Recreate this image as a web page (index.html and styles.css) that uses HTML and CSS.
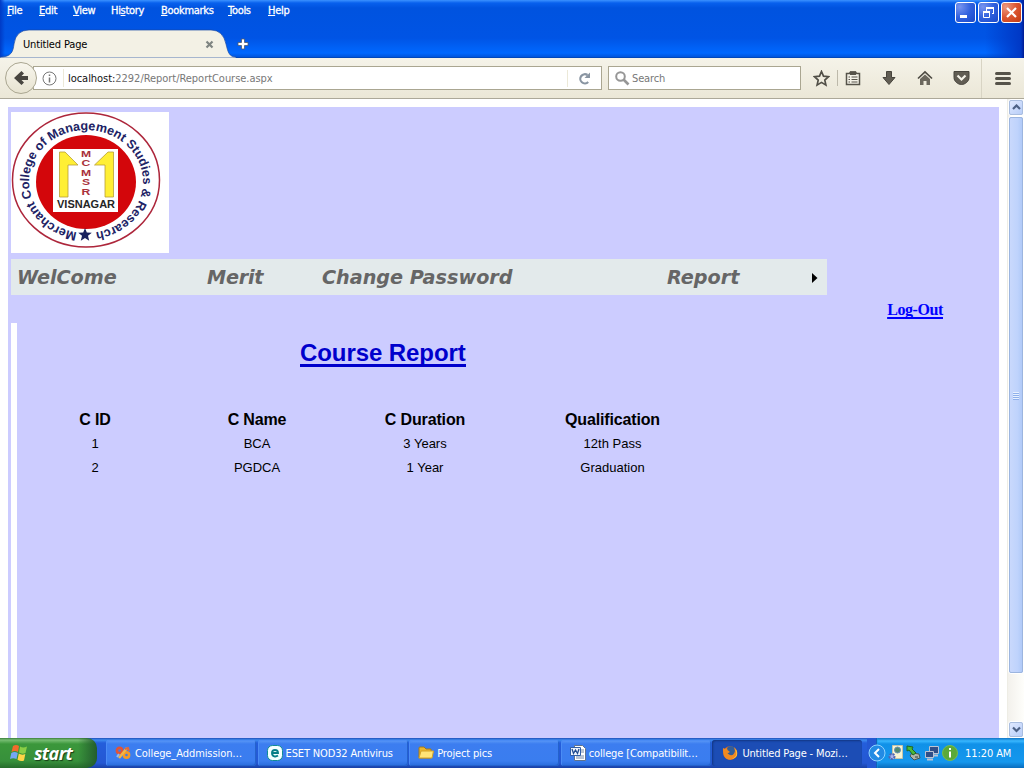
FILE: index.html
```html
<!DOCTYPE html>
<html lang="en">
<head>
<meta charset="utf-8">
<title>Untitled Page</title>
<link rel="stylesheet" href="styles.css">
</head>
<body>
<div class="screen">
  <header class="chrome">
    <div class="menu-row">
      <nav class="menus">
        <span class="m-file"><u>F</u>ile</span><span class="m-edit"><u>E</u>dit</span><span class="m-view"><u>V</u>iew</span><span class="m-history">Hi<u>s</u>tory</span><span class="m-bookmarks"><u>B</u>ookmarks</span><span class="m-tools"><u>T</u>ools</span><span class="m-help"><u>H</u>elp</span>
      </nav>
      <div class="window-buttons">
        <span class="wbtn"><svg width="19" height="19"><path d="M4 12h7v3H4z" fill="#fff"/></svg></span>
        <span class="wbtn"><svg width="19" height="19" fill="none" stroke="#fff"><path d="M7 4.500h8M7 5.500h8M14.500 5v6M7.500 5v3M13 10.500h2"/><path d="M4.500 8v6.500h6V8M4 8.500h7M4 9.500h7"/></svg></span>
        <span class="wbtn close"><svg width="19" height="19"><path d="M5 5l9 9M14 5l-9 9" stroke="#fff" stroke-width="2.200"/></svg></span>
      </div>
    </div>
    <div class="tab-row">
      <svg class="tab-shape" width="236" height="29"><path d="M0 28C12 28 13 22 14 15Q16 1 29 1H211Q223 1 226 15C228 23 229 28 236 28V29H0Z" fill="#f3f1e5" stroke="#1747a5" stroke-width=".7"/></svg>
      <div class="tab"><span class="tab-title">Untitled Page</span>
        <svg class="tab-close" width="9" height="9"><path d="M1.500 1.500l6 6M7.500 1.500l-6 6" stroke="#7f8581" stroke-width="2.200"/></svg>
      </div>
      <svg class="new-tab" width="13" height="13"><path d="M4.500 1h3v3.500H11v3H7.500V11h-3V7.500H1v-3h3.500z" fill="#fff" stroke="#4b5a70" stroke-width=".8"/></svg>
    </div>
  </header>

  <div class="toolbar">
    <div class="back"><svg width="16" height="16"><path d="M8.500 1L11 3.500 8.500 6H15v4H8.500L11 12.500 8.500 15 1 8Z" fill="#484640"/></svg></div>
    <div class="address">
      <svg class="info" width="15" height="15" fill="none" stroke="#777"><circle cx="7.500" cy="7.500" r="6.500"/><path d="M7.500 6.500v5M7.500 3.500v1.500" stroke-width="1.500"/></svg>
      <span class="url"><b>localhost:</b>2292/Report/ReportCourse.aspx</span>
      <span class="reload"><svg width="13" height="13"><path d="M9.500 3A4.600 4.600 0 1 0 10.200 10" fill="none" stroke="#8995a2" stroke-width="2.200"/><path d="M12 .5V6H6.500Z" fill="#8995a2"/></svg></span>
    </div>
    <div class="search"><svg width="15" height="15" fill="none" stroke="#969696"><circle cx="5.500" cy="5.500" r="4.300" stroke-width="2"/><path d="M8.500 8.500l5 5" stroke-width="2.600"/></svg><span>Search</span></div>
    <div class="tools">
      <svg width="17" height="17"><path d="M8.500 1.500l2 4.700 5 .5-3.700 3.400 1.100 5-4.400-2.700-4.400 2.700 1.100-5L1.500 6.700l5-.5Z" fill="none" stroke="#514f47" stroke-width="1.700"/></svg>
      <i class="rule"></i>
      <svg width="16" height="16"><path d="M1.500 3.500h3l1-1.500h5l1 1.500h3v11h-13z" fill="#f4f2e8" stroke="#56534a" stroke-width="1.500"/><path d="M5 1.500h6V5H5z" fill="#56534a"/><path d="M3.500 7h1.500M6.500 7h6M3.500 9.500h1.500M6.500 9.500h6M3.500 12h1.500M6.500 12h6" stroke="#56534a" stroke-width="1.100"/></svg>
      <svg width="16" height="16"><path d="M5.500 1.500h5v6H14L8 14.500 2 7.500h3.500Z" fill="#615d53" stroke="#47443d"/></svg>
      <svg width="16" height="16"><path d="M1 8.500L8 2l7 6.500" fill="none" stroke="#4f4c44" stroke-width="1.700"/><path d="M3 9l5-4.500L13 9v6H9.500v-4h-3v4H3z" fill="#6c685e"/></svg>
      <svg width="17" height="16"><path d="M1 1.500h15v6c0 4-4 7-7.500 7S1 11.500 1 7.500Z" fill="#615d53" stroke="#47443d"/><path d="M4.500 5.500l4 4 4-4" fill="none" stroke="#f4f2e8" stroke-width="2.200"/></svg>
    </div>
    <div class="burger"><i></i><i></i><i></i></div>
  </div>

  <div class="viewport">
    <main class="page">
      <div class="logo">
        <svg width="158" height="141" viewBox="0 0 158 141">
          <defs><path id="ring" d="M75 121A57 51.500 0 0 1 75 18A57 51.500 0 0 1 75 121"/></defs>
          <ellipse cx="75" cy="68" rx="73.500" ry="67" fill="#fff" stroke="#ad263b" stroke-width="1.500"/>
          <ellipse cx="75" cy="70" rx="50" ry="47" fill="#d3060b"/>
          <path d="M42 37h65v63H42z" fill="#fff"/>
          <path d="M48.500 85V40H54l13 13H57v32zM102.500 85V40H97L83.500 53H94v32z" fill="#ffef35" stroke="#b8a037" stroke-width=".8"/>
          <g class="logo-letters" transform="translate(75 0) scale(1.35 1)"><text y="45">M</text><text y="54.500">C</text><text y="64">M</text><text y="73.500">S</text><text y="83">R</text></g>
          <text class="logo-place" x="46" y="95.500" textLength="58" lengthAdjust="spacingAndGlyphs">VISNAGAR</text>
          <text class="logo-ring"><textPath href="#ring" startOffset="9" textLength="322" lengthAdjust="spacing">Merchant College of Management Studies &amp; Research</textPath></text>
          <path d="M74 116l1.800 4.500 5 .3-3.800 3 1.200 5-4.200-2.800-4.200 2.800 1.200-5-3.800-3 5-.3Z" fill="#18205e"/>
        </svg>
      </div>
      <nav class="site-nav"><span class="n-welcome">WelCome</span><span class="n-merit">Merit</span><span class="n-change">Change Password</span><span class="n-report">Report</span><svg width="6" height="10"><path d="M0 0l5.500 5L0 10z"/></svg></nav>
      <div class="logout"><a href="#">Log-Out</a></div>
      <section class="report">
        <h1><span>Course Report</span></h1>
        <table>
          <thead><tr><th>C ID</th><th>C Name</th><th>C Duration</th><th>Qualification</th></tr></thead>
          <tbody><tr><td>1</td><td>BCA</td><td>3 Years</td><td>12th Pass</td></tr><tr><td>2</td><td>PGDCA</td><td>1 Year</td><td>Graduation</td></tr></tbody>
        </table>
      </section>
    </main>
    <div class="scrollbar">
      <div class="sbtn"><svg width="9" height="7"><path d="M1 5l3.500-3.500L8 5" fill="none" stroke="#4d6185" stroke-width="2.200"/></svg></div>
      <div class="thumb"><i></i><i></i><i></i><i></i></div>
      <div class="track"></div>
      <div class="sbtn"><svg width="9" height="7"><path d="M1 1.500L4.500 5 8 1.500" fill="none" stroke="#4d6185" stroke-width="2.200"/></svg></div>
    </div>
  </div>

  <footer class="taskbar">
    <div class="start">
      <svg width="19" height="18"><path d="M3 2q3-2 6 0L8 8Q5 6 1.500 8z" fill="#f36b2c"/><path d="M10 2.500q3 2 7 0L15.500 9Q12 10.500 9 8.500z" fill="#8ace46"/><path d="M1.300 9q3-2 6.500 0L6.500 15Q3 13.500 0 15z" fill="#75a7f4"/><path d="M8.800 9.500q3 2 6.500.5L14 16.500q-3 1.500-6.500-.8z" fill="#ffd447"/></svg>
      <span>start</span>
    </div>
    <div class="tasks">
      <div class="task t1"><svg width="16" height="16"><circle cx="4.500" cy="5.500" r="2.600" fill="none" stroke="#e25335" stroke-width="2.600"/><circle cx="11.500" cy="10" r="2.600" fill="none" stroke="#f39a27" stroke-width="2.600"/><path d="M4 13L12 3" stroke="#f2b545" stroke-width="2.600"/><path d="M10 4l3-1 1 3" fill="none" stroke="#e0683c" stroke-width="2"/><path d="M4 9l-2 3" stroke="#93b8eb" stroke-width="2"/></svg><span>College_Addmission…</span></div>
      <div class="task t2"><svg width="16" height="16"><rect x=".5" y=".5" width="15" height="15" rx="5" fill="#f3ffff" stroke="#108c95"/><path d="M5 8h6C11 4 5 4 5 8s4 4 6 2.500" fill="none" stroke="#087f88" stroke-width="1.900"/></svg><span>ESET NOD32 Antivirus</span></div>
      <div class="task t3"><svg width="16" height="16"><path d="M1 13V3q0-1 1-1h4l2 2h5v9z" fill="#e9b52e" stroke="#9f7823"/><path d="M1 13L3 6h12.500L14 13z" fill="#ffe477" stroke="#d4a226"/></svg><span>Project pics</span></div>
      <div class="task t4"><svg width="16" height="16"><path d="M4.500.5h8l3 3v12h-11z" fill="#fff" stroke="#60738d"/><path d="M10 5h4M10 7h4M6 11h8M6 13h8" stroke="#7187a6"/><path d="M.5 2.500h10v8H.5z" fill="#eef5ff" stroke="#315fa6"/><path d="M2 4l1.500 4.500L5.500 5l2 3.500L9 4" fill="none" stroke="#214c91" stroke-width="1.300"/></svg><span>college [Compatibilit…</span></div>
      <div class="task t5 active"><svg width="16" height="16"><circle cx="8" cy="8" r="6.800" fill="#e46c1d"/><circle cx="8.800" cy="6.200" r="4.900" fill="#315e9a"/><path d="M1 3l2 1 2-1 .5 2L8 7 5.500 8.500 8 10q4 1 5-4l-1-4q5 4 2.500 9.500Q10 17 4 13.500.5 10 1 3" fill="#f18a22"/><path d="M13 4q4 7-3.500 10 6-1 5.500-6Q15 5 13 4" fill="#ffd13e"/></svg><span>Untitled Page - Mozi…</span></div>
    </div>
    <div class="tray">
      <svg class="tray-toggle" width="18" height="18"><circle cx="9" cy="9" r="8" fill="#238be4" stroke="#90d4ff"/><path d="M11 5L7 9l4 4" fill="none" stroke="#fff" stroke-width="2"/></svg>
      <svg width="16" height="16"><path d="M4.500.5h10v13h-10z" fill="#f7f4d4" stroke="#c3c3aa"/><circle cx="9.500" cy="5" r="3" fill="#508a6e" stroke="#6790b2"/><circle cx="4" cy="11.500" r="2.500" fill="#a8b5ef" stroke="#5365b0" stroke-width="2" stroke-dasharray="2 1"/></svg>
      <svg width="16" height="16"><path d="M6 8l7 1 1 4-6 2-4-4z" fill="#afb5ab" stroke="#465650"/><path d="M1 1l6 1-1 2 4 4-3 2-4-5-2 1z" fill="#4bba38" stroke="#206622"/><path d="M9 12h3" stroke="#304038"/></svg>
      <svg width="16" height="16" fill="#304f88" stroke="#bcc4d3"><path d="M5.500 1.500h9v7h-9z"/><path d="M1.500 6.500h8v6h-8z"/><path d="M3 14.500h6M10 10.500h4" stroke-width="2"/></svg>
      <svg width="16" height="16"><circle cx="8" cy="8" r="7.500" fill="#5ba93a" stroke="#77bd4d"/><path d="M7 6.500h2v6H7zM7 3h2v2H7z" fill="#fff"/></svg>
      <span class="clock">11:20 AM</span>
    </div>
  </footer>
</div>
</body>
</html>
```
FILE: styles.css
```css
* { box-sizing: border-box; }
body { margin: 0; overflow: hidden; font-family: "DejaVu Sans Condensed", "DejaVu Sans", sans-serif; font-size: 11px; }
svg { display: block; flex: none; }
.screen { width: 1024px; height: 768px; display: flex; flex-direction: column; }
.chrome { height: 58px; flex: none; background: linear-gradient(90deg, #003ac5 0, transparent 5px, transparent 985px, #0038c5 1021px, #001b92), linear-gradient(#3b92ff 0, #0860ed 3px, #0053df 8px, #0054e5 38px, #0068ff 53px, #0055dc 57px, #003a9c 58px); }
.menu-row { height: 29px; display: flex; justify-content: space-between; }
.menus { display: flex; padding: 4px 0 0 7px; color: #fff; line-height: 14px; -webkit-text-stroke: .3px #fff; white-space: nowrap; letter-spacing: -.3px; }
.menus u { text-decoration-thickness: 1px; text-underline-offset: 1px; }
.m-file { width: 32px; } .m-edit { width: 34px; } .m-view { width: 38px; } .m-history { width: 50px; } .m-bookmarks { width: 67px; } .m-tools { width: 40px; }
.window-buttons { display: flex; gap: 2px; padding: 2px 2px 0 0; }
.wbtn { width: 21px; height: 21px; border: 1px solid #fff; border-radius: 3px; background: radial-gradient(circle at 20% 20%, #7794ef, #3161de 50%, #1949ca); }
.wbtn.close { background: radial-gradient(circle at 20% 20%, #ed9980, #db5631 50%, #c33a11); }
.tab-row { height: 29px; display: flex; position: relative; }
.tab-shape { position: absolute; left: 0; top: 0; }
.tab { width: 236px; padding: 9px 0 0 23px; position: relative; display: flex; line-height: 14px; }
.tab-title { width: 182px; letter-spacing: -.15px; }
.tab-close { margin-top: 2px; }
.new-tab { margin: 9px 0 0 1px; }
.toolbar { height: 41px; flex: none; display: flex; align-items: center; background: linear-gradient(#f5f3e9, #ebe7d7); border-bottom: 1px solid #aca899; padding-left: 5px; }
.back { width: 32px; height: 32px; border: 1px solid #aaa691; border-radius: 50%; background: linear-gradient(#f8f6ed, #e7e3d1); display: grid; place-items: center; z-index: 1; }
.address { width: 569px; height: 24px; margin-left: -4px; border: 1px solid #aaa691; background: #fff; display: flex; align-items: center; padding-left: 8px; }
.url { margin-left: 6px; border-left: 1px solid #ece9d8; padding: 1px 0 0 4px; line-height: 17px; color: #777; width: 506px; letter-spacing: -.04px; }
.url b { font-weight: 400; color: #111; }
.reload { border-left: 1px solid #ece9d8; padding: 2px 10px; height: 17px; }
.search { width: 193px; height: 24px; margin-left: 6px; border: 1px solid #aaa691; background: #fff; display: flex; align-items: center; padding-left: 6px; gap: 2px; color: #777; letter-spacing: -.15px; }
.search span { padding-top: 1px; }
.tools { display: flex; align-items: center; margin-left: 12px; gap: 20px; width: 168px; }
.rule { width: 1px; height: 16px; background: #bdb9aa; margin: 0 -13px; }
.burger { height: 39px; border-left: 1px solid #d8d4c4; padding: 13px 0 0 13px; display: flex; flex-direction: column; gap: 2px; }
.burger i { width: 16px; height: 3px; border-radius: 2px; background: #56534a; }
.viewport { height: 639px; flex: none; display: flex; background: #fff; padding-left: 8px; }
.page { width: 991px; height: 631px; margin-top: 8px; padding: 5px 0 0 3px; background: #ccf; }
.logo { width: 158px; height: 141px; background: #fff; font-family: "Liberation Sans", Arial, sans-serif; }
.logo-letters { font-size: 9px; font-weight: 700; fill: #a9313b; text-anchor: middle; }
.logo-place { font-size: 11px; font-weight: 700; fill: #252525; }
.logo-ring { font-size: 12.6px; font-weight: 700; fill: #202264; }
.site-nav { width: 816px; height: 36px; margin: 6px 0 0; padding: 2px 0 0 6px; background: #e3eaeb; color: #666; font: italic 700 19.2px/34px "DejaVu Sans", sans-serif; display: flex; align-items: center; white-space: nowrap; }
.n-welcome { width: 190px; } .n-merit { width: 115px; letter-spacing: -.2px; } .n-change { width: 345px; } .n-report { width: 145px; }
.site-nav svg { margin-top: -1px; }
.logout { height: 28px; padding: 6px 56px 0 0; text-align: right; font: 700 16px/18px "Liberation Serif", serif; letter-spacing: -.4px; }
.logout a { color: #00f; text-decoration-thickness: 2px; text-underline-offset: 2px; text-decoration-skip-ink: none; }
.report { height: 416px; border-left: 6px solid #fff; font-family: "Liberation Sans", Arial, sans-serif; }
h1 { margin: 0; padding: 16px 0 0 283px; height: 85px; font-size: 24px; line-height: 28px; letter-spacing: -.08px; color: #00c; }
h1 span { border-bottom: 3px solid #00c; display: inline-block; height: 28px; }
table { width: 699px; margin-left: 2px; border-collapse: collapse; table-layout: fixed; text-align: center; color: #000; }
th, td { padding: 0; height: 24px; }
td { font-size: 13px; padding-bottom: 1px; }
th { font-size: 16px; letter-spacing: -.15px; }
th:nth-child(1) { width: 152px; } th:nth-child(2) { width: 172px; } th:nth-child(3) { width: 164px; }
.scrollbar { width: 17px; margin-left: 8px; height: 639px; border-left: 1px solid #eeede5; background: linear-gradient(90deg, #f3f1ec, #fefefb); display: flex; flex-direction: column; }
.sbtn { height: 17px; flex: none; border: 1px solid #fff; outline: 1px solid #a9bddf; outline-offset: -2px; border-radius: 3px; background: linear-gradient(135deg, #e1eaff, #b6ccf8); display: grid; place-items: center; }
.thumb { height: 558px; flex: none; border: 1px solid #fff; outline: 1px solid #9cb5df; outline-offset: -2px; border-radius: 3px; background: linear-gradient(90deg, #cad9fc, #bfd3fc 60%, #adc8f7); display: flex; flex-direction: column; justify-content: center; align-items: center; gap: 1px; }
.thumb i { width: 6px; height: 1px; background: #e8f1ff; box-shadow: 0 1px #8fb0ec; }
.track { flex: 1; }
.taskbar { height: 30px; flex: none; background: linear-gradient(#1f4fb8 0, #3e8cf0 2px, #245edb 5px, #2458d3 25px, #1941a5 30px); display: flex; color: #fff; }
.start { width: 97px; flex: none; height: 30px; border-radius: 0 10px 10px 0; background: linear-gradient(90deg, transparent 78px, #235d2d), linear-gradient(#3b7e3b 0, #77bd73 2px, #3b973b 6px, #37903b 23px, #266c2b); display: flex; align-items: center; padding-left: 10px; gap: 5px; font: italic 700 18px/28px "Open Sans", sans-serif; text-shadow: 1px 1px 1px #173c16; letter-spacing: -.65px; }
.tasks { display: flex; gap: 1.600px; padding: 2px 0 0 9px; width: 770px; flex: none; }
.task { width: 150px; flex: none; height: 26px; border-radius: 3px; background: linear-gradient(#5e9bf7, #3c7df0 4px, #3a7def 21px, #286bdb); box-shadow: inset 1px 1px #4b8cf5, inset -1px -1px #2462cc; display: flex; align-items: center; padding-left: 9px; gap: 4px; white-space: nowrap; letter-spacing: -.15px; }
.t1 { letter-spacing: -.08px; }
.t2 { gap: 3px; }
.t3, .t4 { gap: 3px; }
.task.active { background: #1c4db5; box-shadow: inset 1px 1px 2px #123682; padding-left: 10px; }
.tray { width: 157px; flex: none; display: flex; align-items: center; gap: 2px; background: linear-gradient(90deg, #2458d3 9px, #0b2e87 9px, #1696e8 10px, transparent 11px), linear-gradient(#1274c5, #38b7ff 3px, #1091e8 6px, #1597ed 24px, #096cbd); }
.tray-toggle { margin-left: 1px; }
.clock { margin-left: 5px; white-space: nowrap; letter-spacing: -.08px; }
```
